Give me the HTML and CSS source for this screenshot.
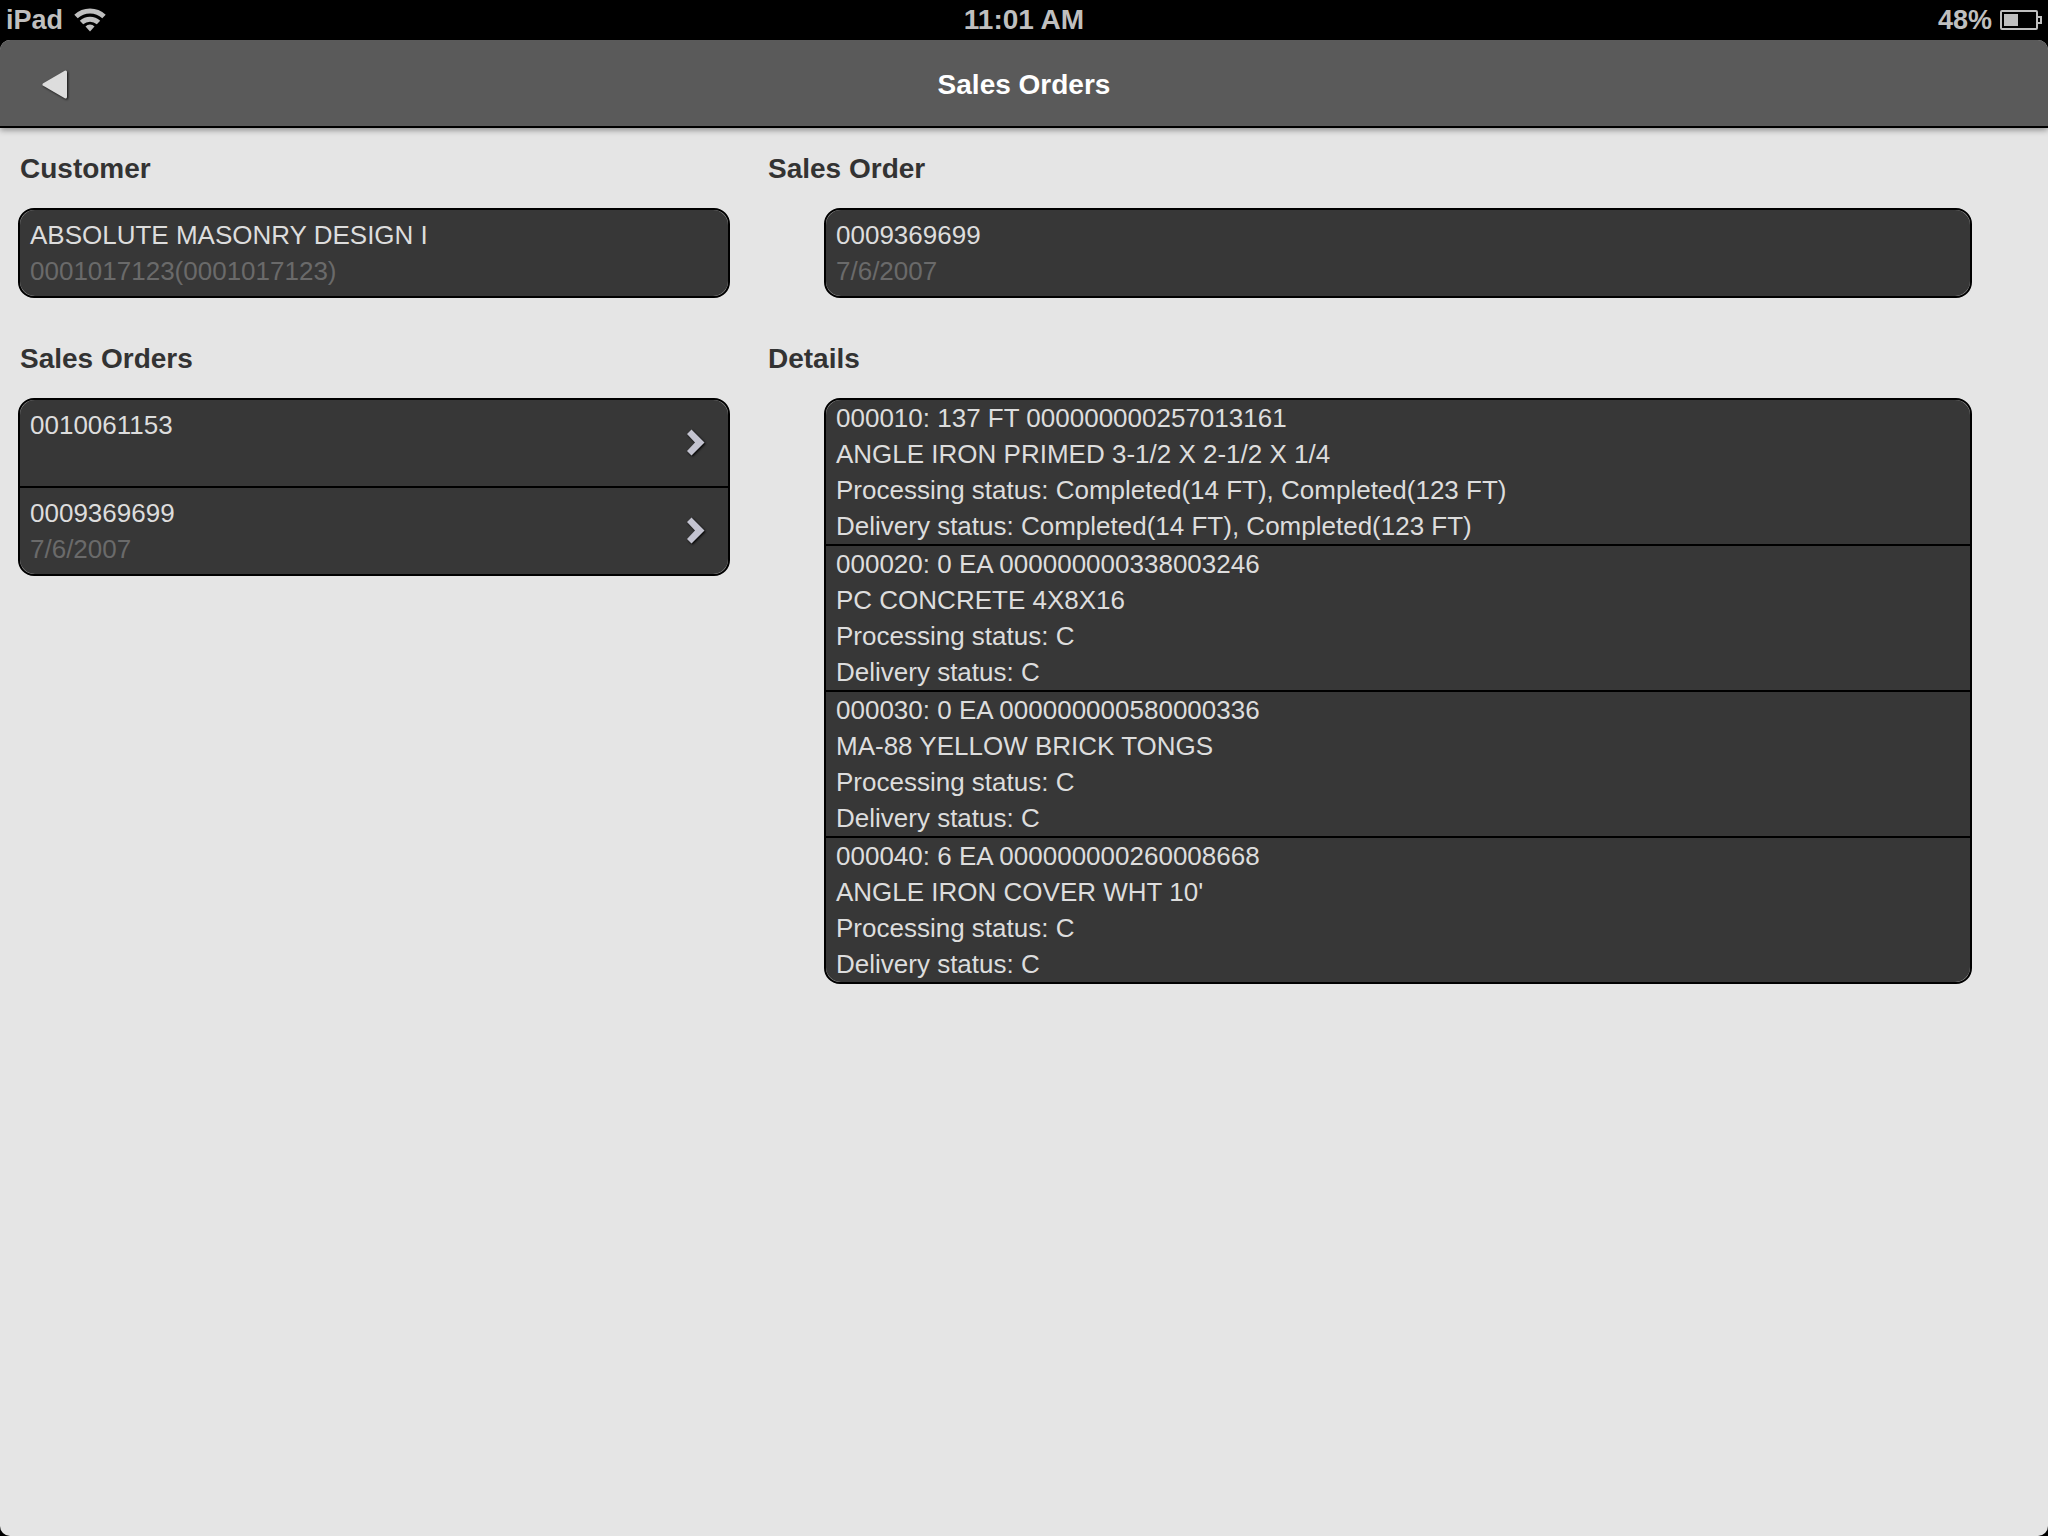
FILE: index.html
```html
<!DOCTYPE html>
<html lang="en">

<head>
    <meta charset="UTF-8">
    <meta name="viewport" content="width=device-width, initial-scale=1.0">
    <title>Sales Orders</title>

    <link rel="stylesheet" href="styles.css">
</head>

<body>
    <div class="status-bar">
        <div class="status-left">
            <span>iPad</span>
            <svg class="wifi" width="32" height="24" viewBox="0 0 32 24">
                <path d="M2 8.500A20.500 20.500 0 0 1 30 8.500" />
                <path d="M7.500 14.500A12.500 12.500 0 0 1 24.500 14.500" />
                <path class="dot" d="M16 23.500L11.500 18.500A6 6 0 0 1 20.500 18.500Z" />
            </svg>
        </div>
        <div class="status-time">11:01 AM</div>
        <div class="status-right">
            <span>48%</span>
            <svg class="battery" width="42" height="20" viewBox="0 0 42 20">
                <rect class="shell" x="1" y="1" width="36" height="18" rx="1" />
                <path class="shell" d="M38 7H41V13H38" />
                <rect class="level" x="4" y="4" width="14" height="12" />
            </svg>
        </div>
    </div>

    <div class="app">
        <header class="toolbar">
            <button class="back" type="button" aria-label="Back">
                <svg width="30" height="32" viewBox="0 0 30 32">
                    <path d="M4 15.500L25.500 3V28Z" />
                </svg>
            </button>
            <h1>Sales Orders</h1>
        </header>

        <main class="content">
            <div class="col-left">
                <section>
                    <h2>Customer</h2>
                    <div class="card">
                        <div class="row">
                            <p>ABSOLUTE MASONRY DESIGN I</p>
                            <p class="sub">0001017123(0001017123)</p>
                        </div>
                    </div>
                </section>

                <section>
                    <h2>Sales Orders</h2>
                    <div class="card">
                        <a class="row link" href="#">
                            <span>0010061153</span>
                            <svg class="chevron" width="24" height="30" viewBox="0 0 24 30">
                                <path d="M2 6L6.500 1.500L19.500 14.500L6.500 27.500L2 23L10 14.500Z" />
                            </svg>
                        </a>
                        <a class="row link" href="#">
                            <span>0009369699<br><span class="sub">7/6/2007</span></span>
                            <svg class="chevron" width="24" height="30" viewBox="0 0 24 30">
                                <path d="M2 6L6.500 1.500L19.500 14.500L6.500 27.500L2 23L10 14.500Z" />
                            </svg>
                        </a>
                    </div>
                </section>
            </div>

            <div class="col-right">
                <section>
                    <h2>Sales Order</h2>
                    <div class="card">
                        <div class="row">
                            <p>0009369699</p>
                            <p class="sub">7/6/2007</p>
                        </div>
                    </div>
                </section>

                <section>
                    <h2>Details</h2>
                    <div class="card">
                        <div class="row item">
                            <p>000010: 137 FT 000000000257013161</p>
                            <p>ANGLE IRON PRIMED 3-1/2 X 2-1/2 X 1/4</p>
                            <p>Processing status: Completed(14 FT), Completed(123 FT)</p>
                            <p>Delivery status: Completed(14 FT), Completed(123 FT)</p>
                        </div>
                        <div class="row item">
                            <p>000020: 0 EA 000000000338003246</p>
                            <p>PC CONCRETE 4X8X16</p>
                            <p>Processing status: C</p>
                            <p>Delivery status: C</p>
                        </div>
                        <div class="row item">
                            <p>000030: 0 EA 000000000580000336</p>
                            <p>MA-88 YELLOW BRICK TONGS</p>
                            <p>Processing status: C</p>
                            <p>Delivery status: C</p>
                        </div>
                        <div class="row item">
                            <p>000040: 6 EA 000000000260008668</p>
                            <p>ANGLE IRON COVER WHT 10'</p>
                            <p>Processing status: C</p>
                            <p>Delivery status: C</p>
                        </div>
                    </div>
                </section>
            </div>
        </main>
    </div>
</body>

</html>
```
FILE: styles.css
```css
* {
    margin: 0;
    padding: 0;
    box-sizing: border-box;
}

body {
    min-height: 100vh;
    display: flex;
    flex-direction: column;
    background: #000;
    color: #ddd;
    font-family: "Liberation Sans", Arial, sans-serif;
    font-size: 26px;
    line-height: 36px;
}

/* status bar */
.status-bar {
    display: grid;
    grid-template-columns: 1fr auto 1fr;
    align-items: center;
    height: 40px;
    padding: 0 6px;
    color: #bfbfbf;
    font-size: 27px;
    font-weight: bold;
}

.status-left,
.status-right {
    display: flex;
    align-items: center;
}

.status-left {
    gap: 11px;
}

.status-right {
    justify-content: flex-end;
    gap: 8px;
}

.status-time {
    font-size: 28px;
}

.wifi {
    fill: none;
    stroke: #bfbfbf;
    stroke-width: 5;
}

.wifi .dot {
    fill: #bfbfbf;
    stroke: none;
}

.battery .shell {
    fill: none;
    stroke: #bfbfbf;
    stroke-width: 2;
}

.battery .level {
    fill: #bfbfbf;
}

/* page */
.app {
    flex: 1;
    background: #e5e5e5;
    border-radius: 10px;
    overflow: hidden;
}

.toolbar {
    display: grid;
    grid-template-columns: 1fr auto 1fr;
    align-items: center;
    height: 88px;
    padding: 3px 40px 0;
    background: #5a5a5a;
    border-bottom: 2px solid #000;
    box-shadow: 0 2px 6px rgba(0, 0, 0, 0.4);
}

.toolbar h1 {
    color: #fff;
    font-size: 28px;
}

.back {
    width: 30px;
    height: 32px;
    background: none;
    border: none;
    cursor: pointer;
}

.back svg {
    display: block;
    fill: #ddd;
    stroke: #ddd;
    stroke-width: 3;
    stroke-linejoin: round;
    filter: drop-shadow(1px 1px 1px rgba(0, 0, 0, 0.8));
}

.content {
    display: grid;
    grid-template-columns: 3fr 5fr;
}

section h2 {
    padding: 21px 0 19px;
    color: #333;
    font-size: 28px;
    line-height: 40px;
}

section {
    margin-bottom: 20px;
}

.col-left h2 {
    padding-left: 20px;
}

.col-left .card {
    margin: 0 38px 0 18px;
}

.col-right .card {
    margin: 0 76px 0 56px;
}

/* rows are rounder than the card, so a light edge shows in the corners */
.card {
    background: #999;
    border: 2px solid #000;
    border-radius: 16px;
}

.row {
    display: block;
    min-height: 86px;
    padding: 7px 10px;
    background: #373737;
}

.row + .row {
    border-top: 2px solid #000;
}

.row:first-child {
    border-top-left-radius: 15px;
    border-top-right-radius: 15px;
}

.row:last-child {
    border-bottom-left-radius: 15px;
    border-bottom-right-radius: 15px;
}

/* the divider would bend with rounded top corners, so only the ends are rounded */
.item {
    padding: 0 10px;
}

.link {
    display: flex;
    justify-content: space-between;
    color: #ddd;
    text-decoration: none;
}

.link + .link {
    min-height: 88px;
}

.sub {
    color: #6a6a6a;
}

.chevron {
    align-self: center;
    margin-right: 9px;
    fill: #c3c3d0;
    filter: drop-shadow(1px 1px 1px #000);
}
```
